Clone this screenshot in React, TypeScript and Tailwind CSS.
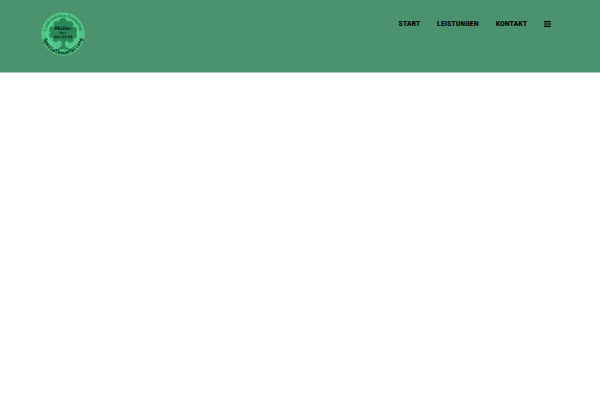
const links = [
  { label: "START", href: "#start" },
  { label: "LEISTUNGEN", href: "#leistungen" },
  { label: "KONTAKT", href: "#kontakt" },
];

const Logo = () => (
  <svg viewBox="0 0 132 132" className="size-11" role="img" aria-label="Müller Spezialbaumfällung">
    <defs>
      <path id="arc-top" d="M14 66a52 52 0 0 1 104 0" />
      <path id="arc-bottom" d="M5 66a61 61 0 0 0 122 0" />
    </defs>
    <circle cx="66" cy="66" r="65" fill="#4fc586" />
    <circle cx="66" cy="66" r="47" fill="#50c487" stroke="#65df9d" strokeWidth="2" />
    {/* tree */}
    <g fill="#2b8658">
      <circle cx="48" cy="37" r="10" />
      <circle cx="66" cy="30" r="12" />
      <circle cx="86" cy="38" r="11" />
      <circle cx="35" cy="53" r="10" />
      <circle cx="98" cy="55" r="10" />
      <circle cx="33" cy="70" r="8" />
      <circle cx="100" cy="71" r="8" />
      <circle cx="44" cy="81" r="9" />
      <circle cx="88" cy="82" r="10" />
      <ellipse cx="66" cy="60" rx="32" ry="24" />
      <path d="M48 82l14 8v12l-12 8-16 6 32-4 33 4-17-7-10-7V90l16-12z" />
    </g>
    <g className="font-['DejaVu_Sans'] font-bold" textAnchor="middle" fill="#06180f">
      <text x="66" y="53" fontSize="14">Müller</text>
      <text x="66" y="66" fontSize="9">Tel.:</text>
      <text x="66" y="79" fontSize="10">441 44 08</text>
    </g>
    <text className="font-['Liberation_Serif'] font-bold" textAnchor="middle" fontSize="12" fill="#1d6e46">
      <textPath href="#arc-top" startOffset="50%">Landschaftsbau Baumpflege</textPath>
    </text>
    <text className="font-['DejaVu_Sans_Mono'] font-bold" textAnchor="middle" fontSize="15" fill="#06180f">
      <textPath href="#arc-bottom" startOffset="50%">Spezialbaumfällung</textPath>
    </text>
  </svg>
);

const App = () => {
  return (
    <div className="min-h-screen bg-white font-['Roboto_Condensed',Roboto,sans-serif]">
      <header className="flex items-start justify-between border-b border-[#a5cbb7] bg-[#4a936e] pt-3 pr-[49px] pb-4 pl-[41px]">
        <a href="#start" className="block">
          <Logo />
        </a>
        <nav className="flex items-center gap-[17px] pt-1">
          {links.map((link) => (
            <a key={link.label} href={link.href} className="text-[8px] leading-4 font-bold text-black">
              {link.label}
            </a>
          ))}
          <button type="button" aria-label="Menü" className="flex h-4 items-center text-black">
            <svg viewBox="0 0 14 12" className="h-[6px] w-[7px]" fill="currentColor">
              <path d="M0 0h14v2.4H0zM0 4.8h14v2.4H0zM0 9.6h14V12H0z" />
            </svg>
          </button>
        </nav>
      </header>
    </div>
  );
};

export default App;
